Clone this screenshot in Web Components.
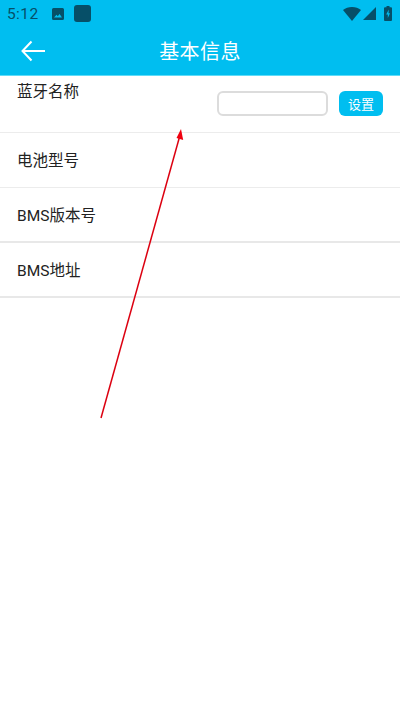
<!DOCTYPE html>
<html>
<head>
<meta charset="utf-8">
<style>
html, body { margin: 0; padding: 0; background: #fff; }
body { font-family: Roboto, "Noto Sans CJK SC", sans-serif; }
</style>
</head>
<body>
<info-page>
    <status-bar></status-bar>
    <title-bar>基本信息</title-bar>
    <info-row label="蓝牙名称" top>
        <name-form></name-form>
    </info-row>
    <info-row label="电池型号"></info-row>
    <info-row label="BMS版本号" thick></info-row>
    <info-row label="BMS地址" thick></info-row>
</info-page>
<script>
const pageTemplate = document.createElement('template');
pageTemplate.innerHTML = `
<style>
:host { display: block; position: relative; width: 400px; height: 711px; overflow: hidden; background: #fff; }
svg { position: absolute; left: 0; top: 0; }
</style>
<slot></slot>
<svg width="400" height="711" viewBox="0 0 400 711">
    <line x1="101" y1="418" x2="179.5" y2="137" stroke="#dc0010" stroke-width="1.5"/>
    <polygon points="181,129 183.200,140 176.500,138" fill="#f0000f"/>
</svg>
`;

const statusTemplate = document.createElement('template');
statusTemplate.innerHTML = `
<style>
:host { display: flex; align-items: center; height: 27px; background: #00bef0; color: #064f68; padding: 0 8px 0 7px; box-sizing: border-box; }
.time { font-size: 15.5px; letter-spacing: 0.4px; width: 44px; }
.right { margin-left: auto; display: flex; align-items: center; }
svg { display: block; }
.app { width: 17px; height: 17px; border-radius: 3px; background: #064f68; margin-left: 9px; }
.wifi { margin-right: 2px; }
.signal { margin-right: 8px; }
</style>
<span class="time">5:12</span>
<svg width="14" height="14" viewBox="0 0 14 14" fill="#064f68"><path d="M1 2.500A1.500 1.500 0 0 1 2.500 1h9A1.500 1.500 0 0 1 13 2.500v9a1.500 1.500 0 0 1-1.500 1.500h-9A1.500 1.500 0 0 1 1 11.500z M3 10.500h8L8.600 7 6.800 9.300 5.500 7.800z" fill-rule="evenodd"/></svg>
<span class="app"></span>
<span class="right">
    <svg class="wifi" width="18" height="14" viewBox="0 0 18 14" fill="#064f68"><path d="M0 3C2.500 1 5.500 0 9 0s6.500 1 9 3L9 14z"/></svg>
    <svg class="signal" width="13" height="13" viewBox="0 0 13 13" fill="#064f68"><path d="M13 0v13H0z"/></svg>
    <svg width="8" height="15" viewBox="0 0 8 15"><path fill-rule="evenodd" fill="#064f68" d="M2.500 0h3v1.300H7a1 1 0 0 1 1 1V14a1 1 0 0 1-1 1H1a1 1 0 0 1-1-1V2.300a1 1 0 0 1 1-1h1.500z M4.800 3.500 2.200 8.500h1.600v3.500L6 7.300H4.500z"/></svg>
</span>
`;

const titleTemplate = document.createElement('template');
titleTemplate.innerHTML = `
<style>
:host { display: flex; align-items: center; justify-content: center; position: relative; height: 48px; background: #00bef0; color: #fff; font-size: 20px; border-bottom: 1px solid #5fdcf8; box-sizing: content-box; }
.title { letter-spacing: 0.4px; margin-bottom: 2px; }
svg { position: absolute; left: 21px; top: 12px; }
</style>
<svg width="25" height="24" viewBox="0 0 25 24" fill="none" stroke="#fff" stroke-width="2">
    <path d="M10.500 2.500 1.500 12l9 9.500M1.500 12h22.500"/>
</svg>
<span class="title"><slot></slot></span>
`;

const rowTemplate = document.createElement('template');
rowTemplate.innerHTML = `
<style>
:host { display: flex; align-items: center; height: 55px; box-sizing: border-box; padding: 0 17px 2px 17px; border-bottom: 1.500px solid #ececec; color: #222; font-size: 15.500px; }
:host([top]) { height: 57px; align-items: flex-start; padding-bottom: 0; }
:host([top]) .label { margin-top: 3px; }
:host([thick]) { border-bottom: 2px solid #e8e8e8; }
.label { white-space: nowrap; }
.end { margin-left: auto; }
</style>
<span class="label"></span>
<span class="end"><slot></slot></span>
`;

const formTemplate = document.createElement('template');
formTemplate.innerHTML = `
<style>
:host { display: flex; align-items: center; gap: 11px; margin-top: 15px; }
.field { width: 111px; height: 25px; box-sizing: border-box; border: 2px solid #dcdcdc; border-radius: 6px; background: #fff; }
.btn { width: 44px; height: 25px; border-radius: 6px; background: #00bef0; color: #fff; font-size: 13px; display: flex; align-items: center; justify-content: center; }
</style>
<span class="field"></span>
<span class="btn">设置</span>
`;

class InfoPage extends HTMLElement {
    constructor() {
        super();
        this.attachShadow({ mode: 'open' }).append(pageTemplate.content.cloneNode(true));
    }
}
class StatusBar extends HTMLElement {
    constructor() {
        super();
        this.attachShadow({ mode: 'open' }).append(statusTemplate.content.cloneNode(true));
    }
}
class TitleBar extends HTMLElement {
    constructor() {
        super();
        this.attachShadow({ mode: 'open' }).append(titleTemplate.content.cloneNode(true));
    }
}
class InfoRow extends HTMLElement {
    constructor() {
        super();
        const shadow = this.attachShadow({ mode: 'open' });
        const temp = rowTemplate.content.cloneNode(true);
        temp.querySelector('.label').textContent = this.getAttribute('label');
        shadow.append(temp);
    }
}
class NameForm extends HTMLElement {
    constructor() {
        super();
        this.attachShadow({ mode: 'open' }).append(formTemplate.content.cloneNode(true));
    }
}
customElements.define('info-page', InfoPage);
customElements.define('status-bar', StatusBar);
customElements.define('title-bar', TitleBar);
customElements.define('info-row', InfoRow);
customElements.define('name-form', NameForm);
</script>
</body>
</html>
